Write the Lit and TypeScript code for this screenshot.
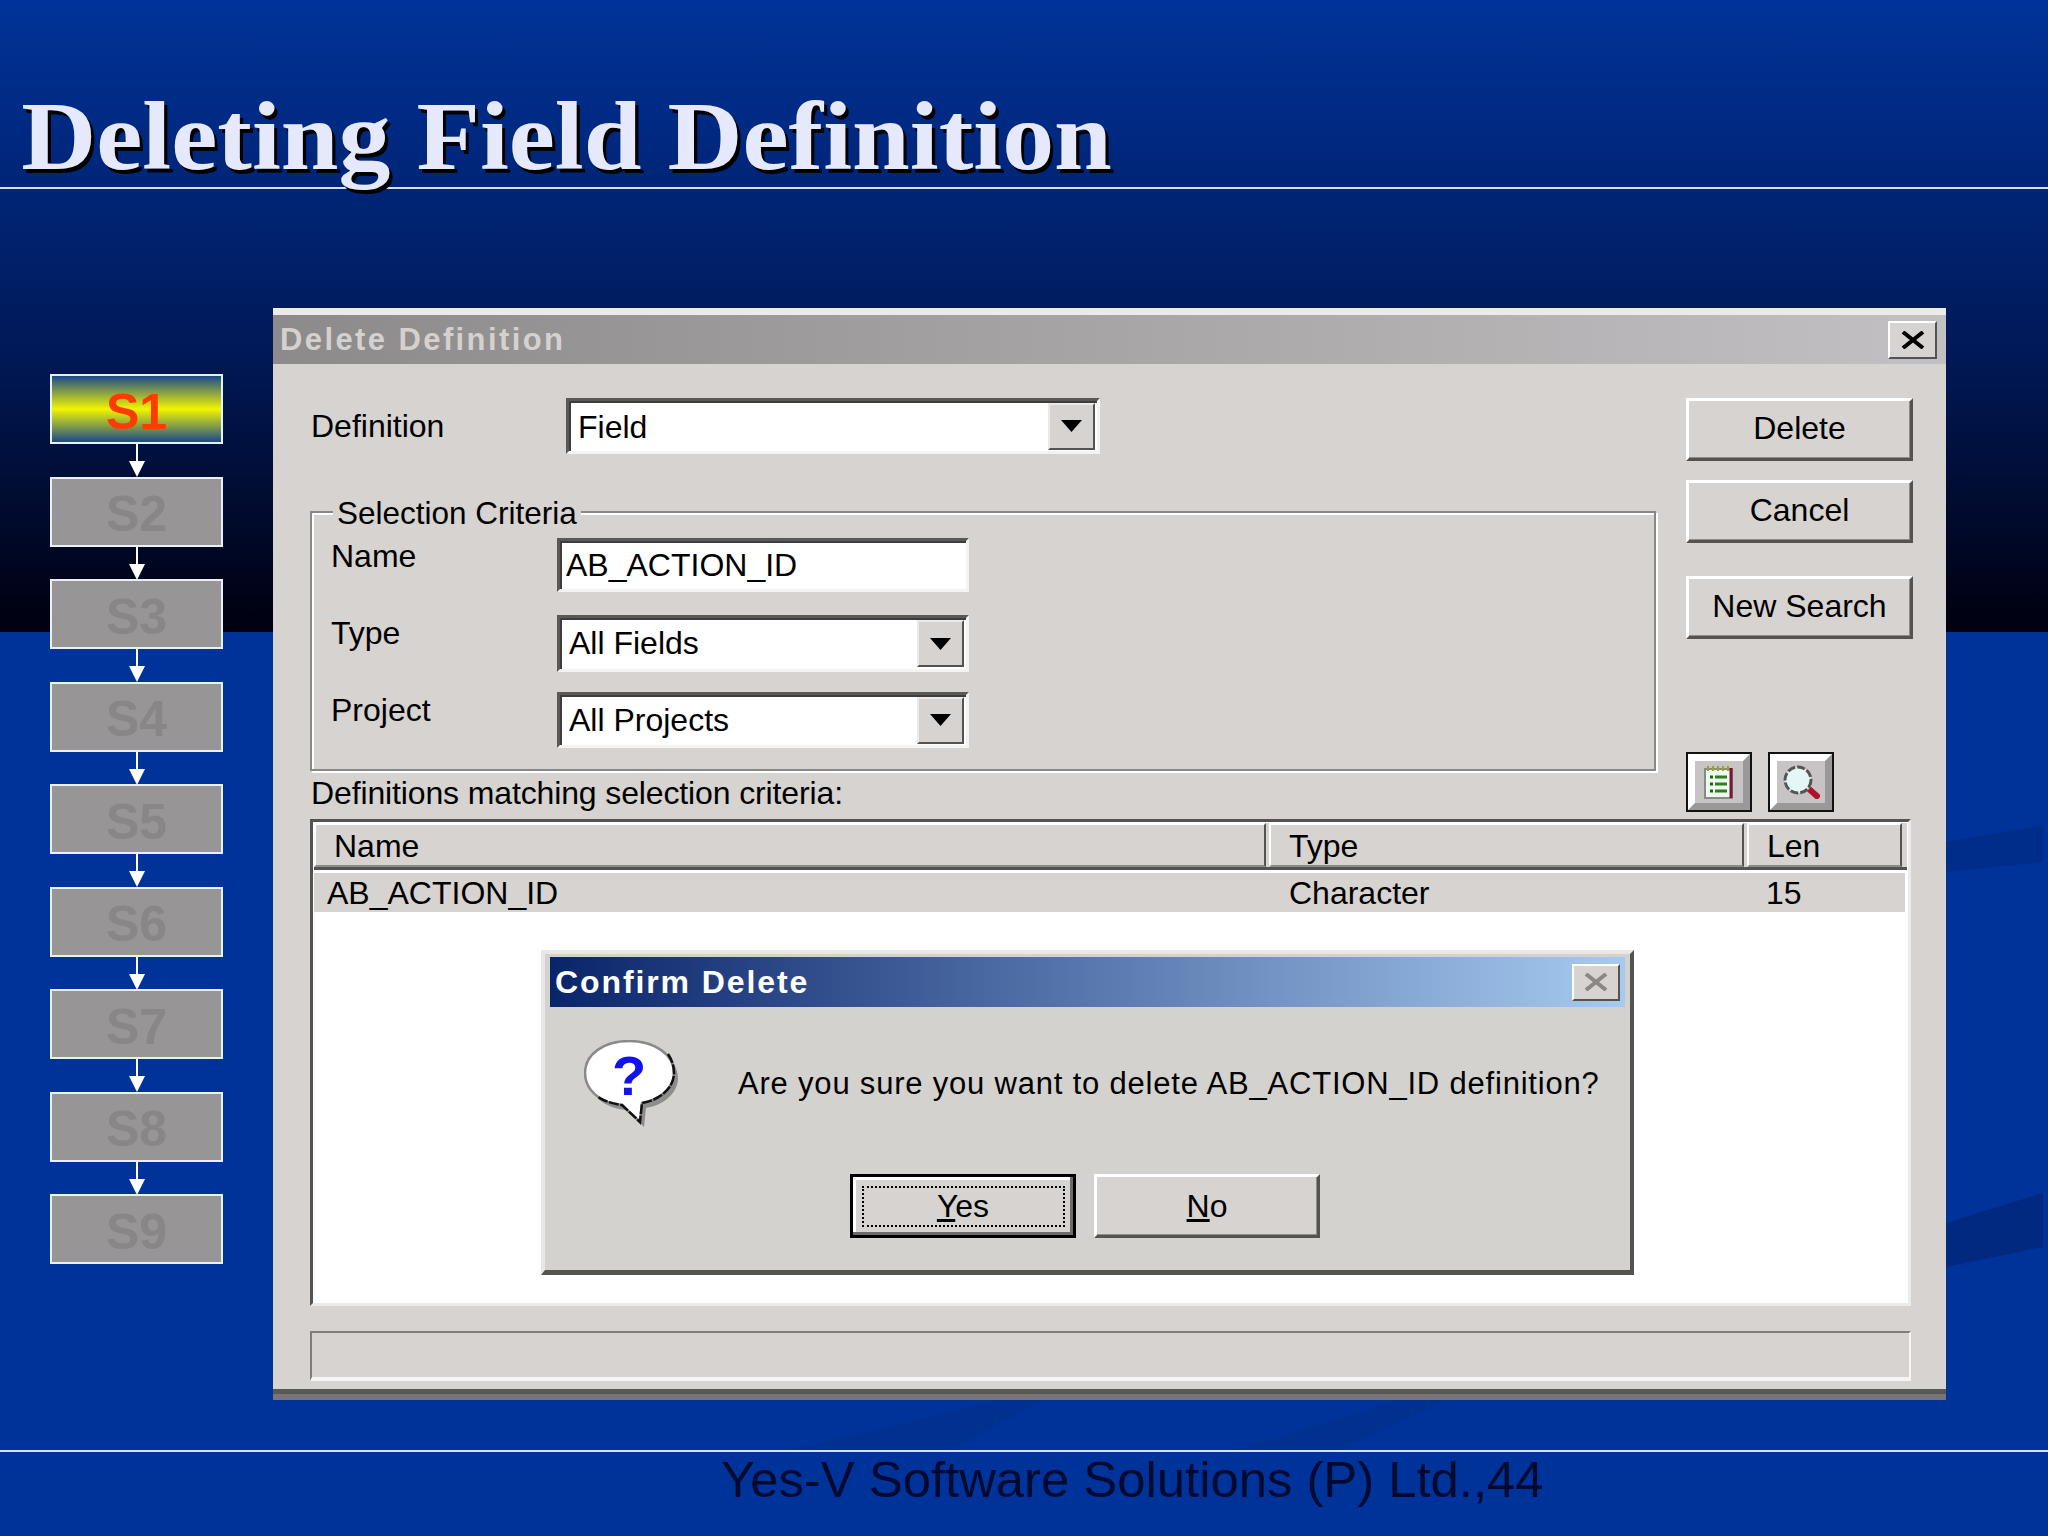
import { LitElement, html, css, svg } from "lit";
import { customElement } from "lit/decorators.js";

const STEPS = ["S1", "S2", "S3", "S4", "S5", "S6", "S7", "S8", "S9"];

const closeIcon = (color: string) => svg`<svg width="26" height="18" viewBox="0 0 26 18"><path d="M3 1 L23 17 M23 1 L3 17" stroke="${color}" stroke-width="4" fill="none"/></svg>`;

const arrowDown = html`<svg class="dd-arrow" width="21" height="12" viewBox="0 0 21 12"><path d="M0 0H21L10.500 12Z" fill="#000"/></svg>`;

const flowArrow = html`<svg class="flow-arrow" width="18" height="33" viewBox="0 0 18 33"><path d="M9 0V18" stroke="#fff" stroke-width="2"/><path d="M1 17H17L9 33Z" fill="#fff"/></svg>`;

const notepad = html`<svg width="30" height="34" viewBox="0 0 30 34">
  <path d="M1 4H28V33H1Z" fill="#eef8ee" stroke="#858b87" stroke-width="2"/>
  <path d="M27 3V33" stroke="#7b1538" stroke-width="3"/>
  <path d="M4 1V6M9 1V6M14 1V6M19 1V6M24 1V6" stroke="#9aa320" stroke-width="2"/>
  <path d="M6 12H9M6 19H9M6 26H9" stroke="#0e6b0e" stroke-width="3"/>
  <path d="M11 12H23M11 19H23M11 26H23" stroke="#2e7d1e" stroke-width="3"/>
</svg>`;

const magnifier = html`<svg width="37" height="34" viewBox="0 0 37 34">
  <circle cx="15" cy="15" r="13" fill="#e4f6f6" stroke="#555" stroke-width="3" stroke-dasharray="8 2"/>
  <path d="M26 24L36 33" stroke="#b0102a" stroke-width="6"/>
</svg>`;

const question = html`<svg width="96" height="88" viewBox="0 0 96 88">
  <path transform="translate(4 5)" d="M45 1C70 1 90 14 90 33C90 48 76 60 58 63L56 82L38 65C16 63 1 50 1 33C1 14 20 1 45 1Z" fill="#8d8d8d"/>
  <path d="M45 1C70 1 90 14 90 33C90 48 76 60 58 63L56 82L38 65C16 63 1 50 1 33C1 14 20 1 45 1Z" fill="#fff" stroke="#8a8a8a" stroke-width="2.500"/>
  <path d="M84 14C88 20 90 26 90 33C90 48 76 60 58 63L56 82L38 65C30 64 22 62 14 57" fill="none" stroke="#111" stroke-width="2.500" stroke-dasharray="10 1.500"/>
  <text x="45" y="55" text-anchor="middle" class="qmark">?</text>
</svg>`;

@customElement("app-root")
export class AppRoot extends LitElement {
  static styles = css`
    :host {
      display: block;
      position: relative;
      width: 2048px;
      height: 1536px;
      overflow: hidden;
      background: linear-gradient(to bottom, #003399 0, #00267a 170px, #001a5a 340px, #00000f 632px, #003399 632px);
      font-family: "Liberation Sans", Arial, sans-serif;
      color: #000;
    }
    .wedges { position: absolute; left: 0; top: 0; }
    .header {
      position: relative;
      height: 187px;
      border-bottom: 2px solid #d6e0f4;
    }
    .title {
      display: inline-block;
      margin: 0;
      padding: 87px 0 0 20px;
      font: bold 98px/98px "Liberation Serif", "Times New Roman", serif;
      color: #e6e9fb;
      text-shadow: 3px 4px 0 #000;
      white-space: nowrap;
      transform: scaleX(1.06);
      transform-origin: left top;
    }
    .main {
      position: relative;
      display: flex;
      height: 1261px;
      box-sizing: border-box;
      padding: 119px 0 0 50px;
      gap: 50px;
    }
    .flow {
      display: flex;
      flex-direction: column;
      align-items: center;
      width: 173px;
      margin-top: 66px;
    }
    .step {
      box-sizing: border-box;
      width: 173px;
      height: 70px;
      padding-top: 5px;
      border: 2px solid #e9f0f6;
      background: #979596;
      color: #888687;
      display: flex;
      align-items: center;
      justify-content: center;
      font: bold 50px/1 "Liberation Sans", Arial, sans-serif;
    }
    .step.active {
      background: linear-gradient(to bottom, #1b4a8c 0, #f2f500 50%, #1b4a8c 100%);
      color: #ff3c00;
    }
    .flow-arrow { display: block; margin-bottom: -0.5px; }

    .dialog {
      box-sizing: border-box;
      width: 1673px;
      height: 1086px;
      background: #d6d3d0;
      border-top: 7px solid #ecebe9;
      border-bottom: 5px solid #5a5854;
      box-shadow: 0 6px 0 #77757a;
    }
    .titlebar {
      height: 49px;
      display: flex;
      align-items: center;
      justify-content: space-between;
      box-sizing: border-box;
      padding: 0 9px 0 7px;
      background: linear-gradient(to right, #8c8a8a, #c2c0c2);
      color: #d4d1ce;
      font-size: 31px;
      font-weight: bold;
      letter-spacing: 2.4px;
    }
    .x-btn {
      box-sizing: border-box;
      width: 49px;
      height: 38px;
      display: flex;
      align-items: center;
      justify-content: center;
      background: #d6d3d0;
      border: 2px solid;
      border-color: #fff #55524f #55524f #fff;
    }
    .body { padding: 0 33px 0 37px; }
    .top {
      display: grid;
      grid-template-columns: 1349px 227px;
      column-gap: 27px;
    }
    .def-row {
      display: flex;
      align-items: center;
      margin-top: 34px;
      height: 56px;
    }
    .lbl { font-size: 32px; line-height: 36px; white-space: nowrap; }
    .def-row .lbl { width: 255px; padding-left: 1px; }
    .sunken {
      box-sizing: border-box;
      display: flex;
      align-items: center;
      background: #fff;
      border: 3px solid;
      border-color: #5b5956 #f4f3f1 #f4f3f1 #5b5956;
      box-shadow: inset 2px 2px 0 #3f3d3b;
      font-size: 32px;
      white-space: nowrap;
    }
    .sunken .val { flex: 1; padding-left: 9px; }
    .dd {
      box-sizing: border-box;
      width: 47px;
      height: 47px;
      margin-right: 2px;
      display: flex;
      align-items: center;
      justify-content: center;
      background: #d6d3d0;
      border: 2px solid;
      border-color: #eceae8 #55524f #55524f #eceae8;
    }
    .def-select { width: 534px; height: 56px; }
    .def-select .val { padding-top: 2px; }
    .group {
      position: relative;
      box-sizing: border-box;
      width: 1346px;
      height: 260px;
      margin-top: 57px;
      padding: 25px 0 0 19px;
      border: 2px solid #8a8885;
      box-shadow: 2px 2px 0 #fff, inset 2px 2px 0 #fff;
    }
    .legend {
      position: absolute;
      left: 21px;
      top: -15px;
      padding: 0 4px;
      background: #d6d3d0;
      font-size: 31.5px;
      line-height: 30px;
    }
    .fields {
      display: grid;
      grid-template-columns: 226px 412px;
      grid-template-rows: 77px 77px 56px;
      align-items: start;
    }
    .fields .lbl { line-height: 30px; margin-top: 3px; }
    .fields .sunken { width: 412px; }
    .h54 { height: 54px; }
    .h57 { height: 57px; }
    .h56 { height: 56px; }
    .name-val { padding-left: 6px !important; padding-top: 0; }
    .match { margin-top: 7px; margin-left: 1px; line-height: 30px; letter-spacing: -0.13px; }
    .side { display: flex; flex-direction: column; margin-top: 34px; }
    .btn {
      box-sizing: border-box;
      display: flex;
      align-items: center;
      justify-content: center;
      width: 227px;
      height: 63px;
      padding: 0 0 3px;
      background: #d6d3d0;
      border: 3px solid;
      border-color: #fff #55524f #55524f #fff;
      box-shadow: inset -1px -1px 0 #8e8c88;
      font: 32px "Liberation Sans", Arial, sans-serif;
      color: #000;
    }
    .b2 { margin-top: 19px; }
    .b3 { margin-top: 33px; }
    .tools { display: flex; gap: 20px; margin: 115px 0 2px 2px; }
    .tool {
      box-sizing: border-box;
      width: 62px;
      height: 56px;
      display: flex;
      align-items: center;
      justify-content: center;
      background: #c6c4c4;
      border: 7px solid;
      border-color: #fff #9a9898 #9a9898 #fff;
      box-shadow: 0 0 0 2px #111;
      padding: 0;
    }
    .tool svg { flex: none; }
    .table {
      position: relative;
      box-sizing: border-box;
      width: 1601px;
      height: 487px;
      margin-top: 7px;
      background: #fff;
      border: 3px solid;
      border-color: #55534f #ecebe9 #ecebe9 #55534f;
      padding: 1px;
    }
    .thead, .trow {
      display: grid;
      grid-template-columns: 952px 3px 475px 3px 155px;
      font-size: 32px;
    }
    .thead { height: 44px; background: #d6d3d0; box-shadow: 0 3px 0 #55534f; }
    .th {
      box-sizing: border-box;
      padding: 2px 0 0 18px;
      line-height: 38px;
      background: #d6d3d0;
      border: 2px solid;
      border-color: #fff #55534f #8e8c88 #fff;
    }
    .trow {
      height: 39px;
      margin-top: 6px;
      margin-right: 2px;
      background: #d6d3d0;
      line-height: 40px;
    }
    .trow .c1 { padding-left: 13px; }
    .trow .c2 { padding-left: 20px; }
    .trow .c3 { padding-left: 19px; }
    .status {
      box-sizing: border-box;
      width: 1601px;
      height: 50px;
      margin-top: 25px;
      border: 2px solid;
      border-color: #7f7d79 #f6f5f4 #f6f5f4 #7f7d79;
      border-bottom-width: 4px;
    }
    .confirm {
      position: absolute;
      left: 228px;
      top: 128px;
      box-sizing: border-box;
      width: 1093px;
      height: 325px;
      background: #d3d2ce;
      border-top: 4px solid #e8e7e4;
      border-left: 4px solid #e8e7e4;
      border-right: 4px solid #55534f;
      border-bottom: 5px solid #55534f;
      padding: 3px 5px 0;
    }
    .c-title {
      height: 50px;
      display: flex;
      align-items: center;
      justify-content: space-between;
      box-sizing: border-box;
      padding: 0 5px 0 5px;
      background: linear-gradient(to right, #0a246a, #a6caf0);
      color: #fff;
      font-size: 32px;
      font-weight: bold;
      letter-spacing: 1.9px;
    }
    .c-title .x-btn { width: 48px; height: 37px; }
    .c-msg {
      display: flex;
      align-items: center;
      gap: 58px;
      padding: 33px 0 0 34px;
      font-size: 31px;
      letter-spacing: 0.8px;
      white-space: nowrap;
    }
    .c-msg svg { display: block; flex: none; }
    .qmark { font: bold 56px "Liberation Sans", Arial, sans-serif; fill: #1212ee; letter-spacing: 0; }
    .c-actions {
      display: flex;
      gap: 18px;
      margin-top: 46px;
      padding-left: 300px;
    }
    .c-actions .btn { width: 226px; height: 64px; padding: 0; }
    .yes {
      border: 3px solid #000 !important;
      box-shadow: inset -3px -3px 0 #6e6c68, inset 3px 3px 0 #fff !important;
      position: relative;
    }
    .focus {
      display: flex;
      align-items: center;
      justify-content: center;
      box-sizing: border-box;
      width: 203px;
      height: 41px;
      border: 2px dotted #000;
    }
    .footer {
      border-top: 2px solid #d6e0f4;
      padding: 0 0 0 721px;
      font-size: 50.800px;
      line-height: 56px;
      color: #000a30;
      white-space: nowrap;
    }
  `;

  render() {
    return html`
      <svg class="wedges" width="2048" height="1536" viewBox="0 0 2048 1536">
        <path d="M1946 1223L2043 1193V1247L1946 1267Z" fill="#00297f"/>
        <path d="M1946 842L2043 825V862L1946 872Z" fill="#002d8a"/>
        <path d="M790 1450L1000 1400H1044L950 1450Z" fill="#003090"/>
        <path d="M1236 1450L1400 1400H1448L1340 1450Z" fill="#003090"/>
      </svg>
      <header class="header"><h1 class="title">Deleting Field Definition</h1></header>
      <main class="main">
        <nav class="flow">
          ${STEPS.map(
            (s, i) => html`
              ${i > 0 ? flowArrow : ""}
              <div class="step ${i === 0 ? "active" : ""}">${s}</div>
            `
          )}
        </nav>
        <section class="dialog">
          <div class="titlebar">
            <span>Delete Definition</span>
            <div class="x-btn">${closeIcon("#000")}</div>
          </div>
          <div class="body">
            <div class="top">
              <div>
                <div class="def-row">
                  <span class="lbl">Definition</span>
                  <div class="sunken def-select">
                    <span class="val">Field</span>
                    <div class="dd">${arrowDown}</div>
                  </div>
                </div>
                <div class="group">
                  <span class="legend">Selection Criteria</span>
                  <div class="fields">
                    <span class="lbl">Name</span>
                    <div class="sunken h54"><span class="val name-val">AB_ACTION_ID</span></div>
                    <span class="lbl">Type</span>
                    <div class="sunken h57"><span class="val">All Fields</span><div class="dd">${arrowDown}</div></div>
                    <span class="lbl">Project</span>
                    <div class="sunken h56"><span class="val">All Projects</span><div class="dd">${arrowDown}</div></div>
                  </div>
                </div>
                <div class="lbl match">Definitions matching selection criteria:</div>
              </div>
              <div class="side">
                <button class="btn">Delete</button>
                <button class="btn b2">Cancel</button>
                <button class="btn b3">New Search</button>
                <div class="tools">
                  <button class="tool">${notepad}</button>
                  <button class="tool">${magnifier}</button>
                </div>
              </div>
            </div>
            <div class="table">
              <div class="thead">
                <div class="th">Name</div><div></div>
                <div class="th">Type</div><div></div>
                <div class="th">Len</div>
              </div>
              <div class="trow">
                <div class="c1">AB_ACTION_ID</div><div></div>
                <div class="c2">Character</div><div></div>
                <div class="c3">15</div>
              </div>
              <div class="confirm">
                <div class="c-title">
                  <span>Confirm Delete</span>
                  <div class="x-btn">${closeIcon("#8a8885")}</div>
                </div>
                <div class="c-msg">
                  ${question}
                  <span>Are you sure you want to delete AB_ACTION_ID definition?</span>
                </div>
                <div class="c-actions">
                  <button class="btn yes"><span class="focus"><span><u>Y</u>es</span></span></button>
                  <button class="btn"><span><u>N</u>o</span></button>
                </div>
              </div>
            </div>
            <div class="status"></div>
          </div>
        </section>
      </main>
      <footer class="footer">Yes-V Software Solutions (P) Ltd.,44</footer>
    `;
  }
}
